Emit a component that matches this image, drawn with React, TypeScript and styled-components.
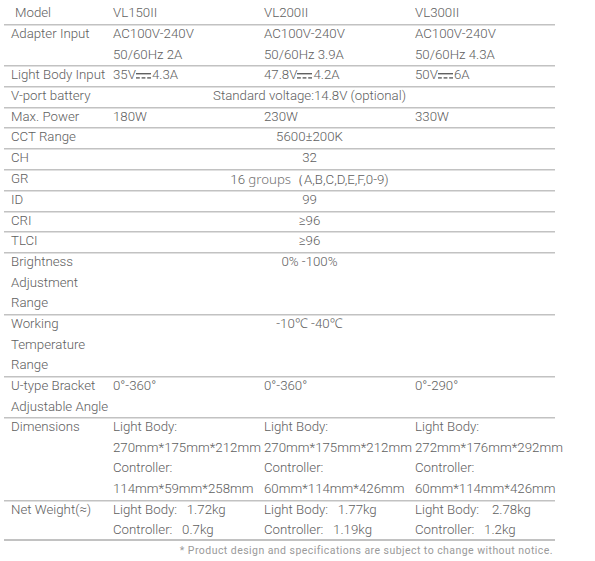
import React from "react";
import styled, { createGlobalStyle } from "styled-components";

const Global = createGlobalStyle`
  html, body { margin: 0; padding: 0; background: #fff; }
  body { font-family: Roboto, "Noto Sans", sans-serif; }
`;

const Page = styled.div`
  padding: 3.4px 0 0 4px;
  width: 551px;
`;

const Table = styled.table`
  width: 551px;
  border-collapse: collapse;
  border-spacing: 0;
  table-layout: fixed;
  font-family: Roboto, "Noto Sans", sans-serif;
  font-weight: 300;
  font-size: 13.25px;
  line-height: 20.64px;
  color: #606060;
  box-shadow: inset 0 -2px 0 #c2c2c2;
`;

const Col = styled.col<{ $w: number }>`
  width: ${(p) => p.$w}px;
`;

const Row = styled.tr<{ $first?: boolean }>`
  & > td {
    box-shadow: ${(p) => (p.$first ? "none" : "inset 0 1.5px 0 #c2c2c2")};
  }
`;

const Label = styled.td<{ $indent?: boolean }>`
  padding: 0 0 0 ${(p) => (p.$indent ? 11 : 7)}px;
  vertical-align: top;
  white-space: nowrap;
`;

const Value = styled.td`
  padding: 0 0 0 1px;
  vertical-align: top;
  white-space: pre;
`;

const Span = styled.td`
  padding: 0 48px 0 0;
  text-align: center;
  vertical-align: top;
  white-space: nowrap;
`;

const Groups = styled.span`
  font-family: "Noto Sans", sans-serif;
  font-weight: 300;
  color: #727272;
`;

const Note = styled.div`
  width: 549px;
  text-align: right;
  font-family: Roboto, sans-serif;
  font-weight: 400;
  font-size: 10.5px;
  letter-spacing: 0.45px;
  line-height: 20px;
  color: #9a9a9a;
`;

const DcSvg = styled.svg`
  display: inline-block;
  vertical-align: baseline;
  margin: 0 1px 0 0;
`;

const Dc = () => (
  <DcSvg width="15" height="6" viewBox="0 0 15 6">
    <rect x="0" y="0" width="15" height="1.4" fill="#606060" />
    <rect x="0" y="4.2" width="3.8" height="1.4" fill="#606060" />
    <rect x="5.6" y="4.2" width="3.8" height="1.4" fill="#606060" />
    <rect x="11.2" y="4.2" width="3.8" height="1.4" fill="#606060" />
  </DcSvg>
);

const Lines = ({ items }: { items: React.ReactNode[] }) => (
  <>
    {items.map((t, i) => (
      <React.Fragment key={i}>
        {i > 0 && <br />}
        {t}
      </React.Fragment>
    ))}
  </>
);

type Cell = React.ReactNode[];
type RowData =
  | { label: string[]; cells: Cell[]; indent?: boolean }
  | { label: string[]; span: React.ReactNode };

const rows: RowData[] = [
  { label: ["Model"], indent: true, cells: [["VL150II"], ["VL200II"], ["VL300II"]] },
  {
    label: ["Adapter Input"],
    cells: [
      ["AC100V-240V", "50/60Hz 2A"],
      ["AC100V-240V", "50/60Hz 3.9A"],
      ["AC100V-240V", "50/60Hz 4.3A"],
    ],
  },
  {
    label: ["Light Body Input"],
    cells: [
      [<>35V<Dc />4.3A</>],
      [<>47.8V<Dc />4.2A</>],
      [<>50V<Dc />6A</>],
    ],
  },
  { label: ["V-port battery"], span: "Standard voltage:14.8V (optional)" },
  { label: ["Max. Power"], cells: [["180W"], ["230W"], ["330W"]] },
  { label: ["CCT Range"], span: "5600±200K" },
  { label: ["CH"], span: "32" },
  {
    label: ["GR"],
    span: (
      <>
        16 <Groups>groups</Groups>（A,B,C,D,E,F,0-9)
      </>
    ),
  },
  { label: ["ID"], span: "99" },
  { label: ["CRI"], span: "≥96" },
  { label: ["TLCI"], span: "≥96" },
  { label: ["Brightness", "Adjustment", "Range"], span: "0% -100%" },
  { label: ["Working", "Temperature", "Range"], span: "-10℃ -40℃" },
  {
    label: ["U-type Bracket", "Adjustable Angle"],
    cells: [["0°-360°"], ["0°-360°"], ["0°-290°"]],
  },
  {
    label: ["Dimensions"],
    cells: [
      ["Light Body:", "270mm*175mm*212mm", "Controller:", "114mm*59mm*258mm"],
      ["Light Body:", "270mm*175mm*212mm", "Controller:", "60mm*114mm*426mm"],
      ["Light Body:", "272mm*176mm*292mm", "Controller:", "60mm*114mm*426mm"],
    ],
  },
  {
    label: ["Net Weight(≈)"],
    cells: [
      ["Light Body:   1.72kg", "Controller:   0.7kg"],
      ["Light Body:   1.77kg", "Controller:   1.19kg"],
      ["Light Body:    2.78kg", "Controller:   1.2kg"],
    ],
  },
];

export default function App() {
  return (
    <>
      <Global />
      <Page>
        <Table>
          <colgroup>
            <Col $w={108} />
            <Col $w={151} />
            <Col $w={151} />
            <Col $w={141} />
          </colgroup>
          <tbody>
            {rows.map((r, i) => (
              <Row key={i} $first={i === 0}>
                <Label $indent={"indent" in r && r.indent}>
                  <Lines items={r.label} />
                </Label>
                {"span" in r ? (
                  <Span colSpan={3}>{r.span}</Span>
                ) : (
                  r.cells.map((c, j) => (
                    <Value key={j}>
                      <Lines items={c} />
                    </Value>
                  ))
                )}
              </Row>
            ))}
          </tbody>
        </Table>
        <Note>* Product design and specifications are subject to change without notice.</Note>
      </Page>
    </>
  );
}
